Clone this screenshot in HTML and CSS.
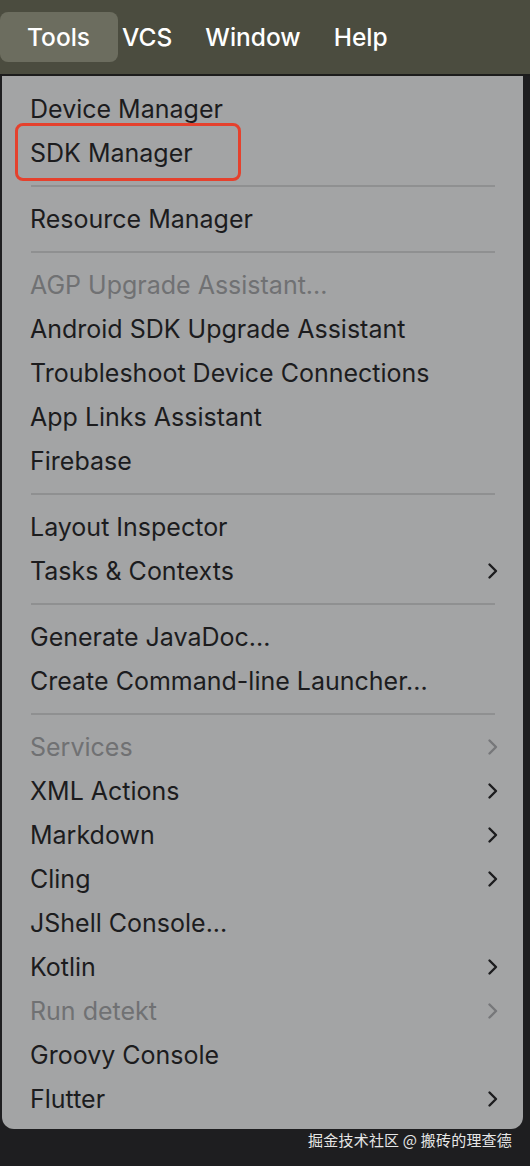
FILE: index.html
```html
<!DOCTYPE html>
<html>
<head>
<meta charset="utf-8">
<link rel="stylesheet" href="styles.css">
</head>
<body>
<div class="menubar">
  <span class="mb-item active">Tools</span>
  <span class="mb-item">VCS</span>
  <span class="mb-item">Window</span>
  <span class="mb-item">Help</span>
</div>
<div class="stage">
  <div class="menu">
    <div class="item">Device Manager</div>
    <div class="item highlight">SDK Manager<span class="redbox"></span></div>
    <div class="sep"></div>
    <div class="item">Resource Manager</div>
    <div class="sep"></div>
    <div class="item disabled">AGP Upgrade Assistant...</div>
    <div class="item">Android SDK Upgrade Assistant</div>
    <div class="item">Troubleshoot Device Connections</div>
    <div class="item">App Links Assistant</div>
    <div class="item">Firebase</div>
    <div class="sep"></div>
    <div class="item">Layout Inspector</div>
    <div class="item sub">Tasks &amp; Contexts<svg class="chev" viewBox="0 0 12 18"><path d="M2.5 2.5 L9 9 L2.5 15.5"/></svg></div>
    <div class="sep"></div>
    <div class="item">Generate JavaDoc...</div>
    <div class="item">Create Command-line Launcher...</div>
    <div class="sep"></div>
    <div class="item disabled sub">Services<svg class="chev" viewBox="0 0 12 18"><path d="M2.5 2.5 L9 9 L2.5 15.5"/></svg></div>
    <div class="item sub">XML Actions<svg class="chev" viewBox="0 0 12 18"><path d="M2.5 2.5 L9 9 L2.5 15.5"/></svg></div>
    <div class="item sub">Markdown<svg class="chev" viewBox="0 0 12 18"><path d="M2.5 2.5 L9 9 L2.5 15.5"/></svg></div>
    <div class="item sub">Cling<svg class="chev" viewBox="0 0 12 18"><path d="M2.5 2.5 L9 9 L2.5 15.5"/></svg></div>
    <div class="item">JShell Console...</div>
    <div class="item sub">Kotlin<svg class="chev" viewBox="0 0 12 18"><path d="M2.5 2.5 L9 9 L2.5 15.5"/></svg></div>
    <div class="item disabled sub">Run detekt<svg class="chev" viewBox="0 0 12 18"><path d="M2.5 2.5 L9 9 L2.5 15.5"/></svg></div>
    <div class="item">Groovy Console</div>
    <div class="item sub">Flutter<svg class="chev" viewBox="0 0 12 18"><path d="M2.5 2.5 L9 9 L2.5 15.5"/></svg></div>
  </div>
  <div class="watermark">掘金技术社区 @ 搬砖的理查德</div>
</div>
</body>
</html>
```

FILE: styles.css
```css
* { box-sizing: border-box; }
html, body {
  margin: 0;
  padding: 0;
  width: 530px;
  height: 1166px;
  overflow: hidden;
  background: #1e1e20;
  font-family: Inter, "Noto Sans", "Liberation Sans", sans-serif;
}
.menubar {
  height: 76px;
  background: #4b4c3f;
  display: flex;
  align-items: center;
  gap: 33px;
  border-bottom: 2px solid #1c1c1c;
}
.mb-item {
  color: #ffffff;
  font-size: 24.5px;
  font-weight: 500;
  height: 50px;
  line-height: 50px;
}
.mb-item.active {
  background: #6c6d5f;
  border-radius: 8px;
  padding: 0 28px 0 27px;
  margin-right: -29px;
}
.stage {
  position: relative;
  padding-left: 2px;
}
.menu {
  width: 521px;
  background: #a3a4a5;
  border-radius: 0 0 12px 12px;
  padding: 11px 0 8px 0;
}
.item {
  position: relative;
  height: 44px;
  line-height: 44px;
  font-size: 25px;
  color: #1c1c1e;
  padding-left: 28px;
  display: flex;
  align-items: center;
  justify-content: space-between;
  padding-right: 24px;
}
.item.disabled { color: #707173; }
.sep {
  height: 22px;
  display: flex;
  align-items: center;
  padding: 0 28px 0 29px;
}
.sep::before {
  content: "";
  flex: 1;
  height: 2px;
  background: #8f9091;
}
.chev {
  width: 12px;
  height: 18px;
  fill: none;
  stroke: #1c1c1e;
  stroke-width: 2.4;
  stroke-linecap: round;
  stroke-linejoin: round;
}
.disabled .chev { stroke: #76777a; }
.redbox {
  position: absolute;
  left: 13px;
  top: -8px;
  width: 226px;
  height: 58px;
  border: 3px solid #e5412d;
  border-radius: 8px;
}
.watermark {
  position: absolute;
  right: 18px;
  top: 1053px;
  font-family: "Noto Sans CJK SC", sans-serif;
  font-size: 15px;
  color: #e6e6e6;
  letter-spacing: 0.2px;
}
```
